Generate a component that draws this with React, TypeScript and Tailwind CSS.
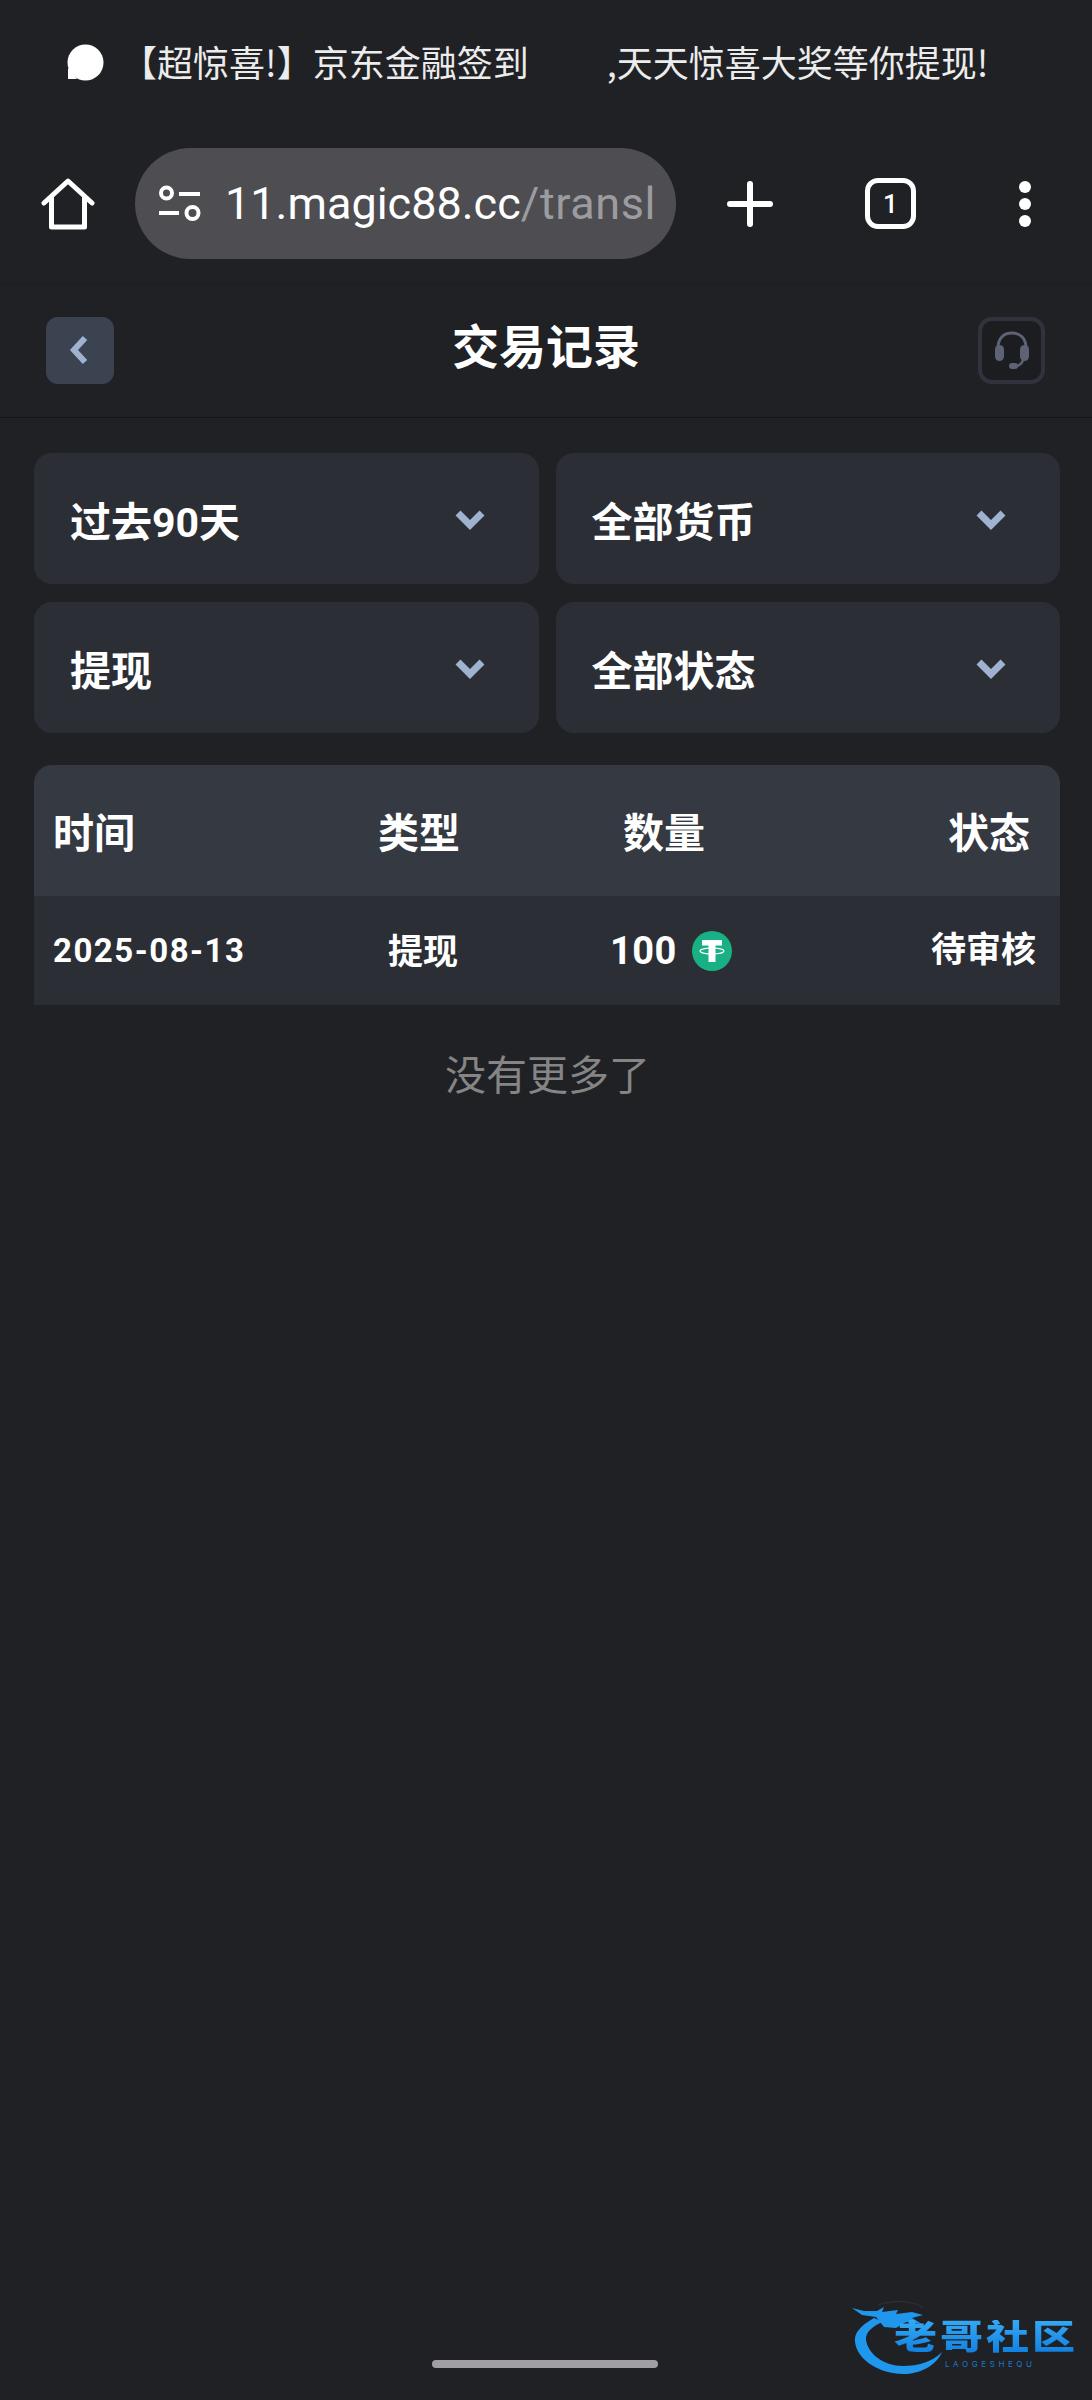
import React from "react";

const cjk = "font-['Roboto','Noto_Sans_CJK_SC',sans-serif]";

function Chevron() {
  return (
    <svg width="30" height="20" viewBox="0 0 30 20" fill="none" className="mt-[2px]">
      <path d="M3 3 L15 15 L27 3" stroke="#9fb3d1" strokeWidth="7" />
    </svg>
  );
}

function Filter({ label }: { label: string }) {
  return (
    <div className="flex h-[131px] items-center justify-between rounded-[18px] bg-[#2b2e35] pl-9 pr-[54px]">
      <span className="pt-[9px] text-[41px] leading-none font-bold text-white">{label}</span>
      <Chevron />
    </div>
  );
}

function Tether() {
  return (
    <svg width="40" height="40" viewBox="0 0 40 40">
      <circle cx="20" cy="20" r="20" fill="#1ab085" />
      <path d="M10 9 H30 V14.5 H23.5 V31 H16.5 V14.5 H10 Z" fill="#fff" />
      <ellipse cx="20" cy="20" rx="12" ry="3" fill="none" stroke="#fff" strokeWidth="1.2" />
    </svg>
  );
}

export default function App() {
  return (
    <div className={`relative h-[2400px] w-[1092px] overflow-hidden bg-[#202125] text-white ${cjk}`}>
      {/* status bar */}
      <div className="flex h-[124px] items-center pb-[2px] pl-[67px]">
        <svg width="37" height="37" viewBox="0 0 37 37" className="mt-[2px] shrink-0">
          <circle cx="18.5" cy="18.5" r="18" fill="#fff" />
          <path d="M1 24 L1 35 L10 35 Z" fill="#fff" />
        </svg>
        <span className="ml-[17px] whitespace-pre text-[36px] leading-none font-normal text-[#ececec] font-['Noto_Sans_CJK_SC',sans-serif]">
          【超惊喜!】京东金融签到
        </span>
        <span className="ml-[78px] whitespace-pre text-[36px] leading-none font-normal text-[#ececec] font-['Noto_Sans_CJK_SC',sans-serif]">
          ,天天惊喜大奖等你提现!
        </span>
      </div>

      {/* browser toolbar */}
      <div className="flex h-[160px] items-start pt-[24px]">
        <div className="flex h-[111px] w-[135px] items-center justify-center">
          <svg width="54" height="52" viewBox="0 0 54 52" fill="none" stroke="#fff" strokeWidth="5" strokeLinejoin="round" strokeLinecap="round">
            <path d="M3 25 L27 3 L51 25" />
            <path d="M10.5 20 V49 H43.5 V20" />
          </svg>
        </div>
        <div className="flex h-[111px] w-[541px] items-center rounded-[56px] bg-[#4d4d52] pl-[24px] pr-[16px]">
          <svg width="42" height="38" viewBox="0 0 42 38" fill="none" stroke="#fff" strokeWidth="4" className="shrink-0">
            <circle cx="7.5" cy="8" r="5.5" />
            <path d="M20 9 H41" />
            <path d="M0 28 H20" />
            <circle cx="33.5" cy="28" r="6" />
          </svg>
          <span className="ml-[24px] whitespace-nowrap text-[45px] leading-[60px] font-['Roboto',sans-serif] text-white">
            11.magic88.cc<span className="tracking-[0.6px] text-[#9c9ca0]">/transl</span>
          </span>
        </div>
        <div className="flex h-[111px] flex-1 items-center">
          <svg width="46" height="46" viewBox="0 0 46 46" className="ml-[51px] shrink-0" stroke="#fff" strokeWidth="6" strokeLinecap="round">
            <path d="M23 3 V43 M3 23 H43" />
          </svg>
          <div className="ml-[92px] flex h-[51px] w-[51px] shrink-0 items-center justify-center rounded-[13px] border-[5px] border-white font-['Roboto',sans-serif] text-[26px] font-medium leading-none">
            1
          </div>
          <div className="ml-[103px] flex shrink-0 flex-col gap-[5px]">
            <div className="h-[12px] w-[12px] rounded-full bg-white" />
            <div className="h-[12px] w-[12px] rounded-full bg-white" />
            <div className="h-[12px] w-[12px] rounded-full bg-white" />
          </div>
        </div>
      </div>

      {/* page header */}
      <div className="flex h-[134px] items-center justify-between border-y border-t-[#1c1d20] border-b-[#141517] pb-[2px] pl-[46px] pr-[47px]">
        <div className="flex h-[67px] w-[68px] items-center justify-center rounded-[12px] bg-[#3c4350]">
          <svg width="20" height="30" viewBox="0 0 20 30" fill="none" className="mr-[3px]">
            <path d="M16 3 L5 15 L16 27" stroke="#9fb3d1" strokeWidth="6" />
          </svg>
        </div>
        <h1 className="mb-[6px] text-[47px] leading-none font-bold text-white">交易记录</h1>
        <div className="flex h-[67px] w-[67px] items-center justify-center rounded-[14px] border-[4px] border-[#30333c] bg-[#1c1d21]">
          <svg width="34" height="40" viewBox="0 0 34 40" fill="none">
            <path d="M3 18 C3 8 9 3 17 3 C25 3 31 8 31 18" stroke="#5e6275" strokeWidth="3" />
            <rect x="0" y="15" width="9" height="16" rx="4.5" fill="#5e6275" />
            <rect x="25" y="15" width="9" height="16" rx="4.5" fill="#5e6275" />
            <path d="M28 30 C27 34 24 36 19 37" stroke="#5e6275" strokeWidth="2.5" />
            <rect x="14" y="33" width="9" height="6" rx="3" fill="#5e6275" />
          </svg>
        </div>
      </div>

      {/* filters */}
      <div className="grid grid-cols-2 gap-x-[17px] gap-y-[18px] pl-[34px] pr-[32px] pt-[35px]">
        <Filter label="过去90天" />
        <Filter label="全部货币" />
        <Filter label="提现" />
        <Filter label="全部状态" />
      </div>

      {/* table */}
      <div className="ml-[34px] mr-[32px] mt-[32px]">
        <div className="relative h-[131px] rounded-t-[18px] bg-[#353942] text-[41px] leading-none font-bold">
          <div className="grid h-full grid-cols-[325px_245px_245px_1fr] items-center pl-[19px] pr-[30px] pt-[7px]">
            <span>时间</span>
            <span>类型</span>
            <span>数量</span>
            <span className="text-right">状态</span>
          </div>
        </div>
        <div className="h-[109px] bg-[#2b2e35]">
          <div className="grid h-full grid-cols-[335px_223px_1fr_auto] items-center pl-[19px] pr-[24px] font-bold">
            <span className="text-[33px] leading-none tracking-[1.5px]">2025-08-13</span>
            <span className="pt-[4px] text-[35px] leading-none">提现</span>
            <span className="-ml-[1px] flex items-center gap-[15px] text-[38px] leading-none tracking-[0.5px]">
              100
              <Tether />
            </span>
            <span className="text-[35px] leading-none">待审核</span>
          </div>
        </div>
      </div>

      <p className="mt-[51px] pl-[3px] text-center text-[41px] leading-none font-normal text-[#858585]">没有更多了</p>

      {/* home indicator */}
      <div className="absolute bottom-[32px] left-[432px] h-[8px] w-[226px] rounded-full bg-[#a0a0a4]" />

      {/* watermark */}
      <div className="absolute left-[850px] top-[2300px] h-[80px] w-[235px]">
        <svg width="100" height="80" viewBox="0 0 100 80" className="absolute left-0 top-0 blur-[0.5px]" fill="none">
          <path d="M24 18 C10 26 4 33 5 42 C7 60 30 74 53 74 C70 74 86 66 92 52 C82 62 68 66 53 66 C34 66 18 54 16 40 C15 32 24 25 33 22 Z" fill="#1f97ec" />
          <path d="M2 8 L14 11 L27 11 L34 7 L32 12 L48 10 L46 14 L62 12 L73 15 L62 18 L72 24 L56 22 L46 28 L34 27 L26 17 L12 15 Z" fill="#1f97ec" />
          <path d="M28 5 C42 0 64 0 73 8" stroke="#2a3440" strokeWidth="1" />
        </svg>
        <span className="absolute left-[44px] top-[20px] origin-top-left scale-y-[0.8] whitespace-nowrap bg-gradient-to-b from-[#35a9f5] to-[#0e7fe0] bg-clip-text text-[43px] leading-none font-black tracking-[3px] text-transparent">
          老哥社区
        </span>
        <span className="absolute left-[95px] top-[60px] whitespace-nowrap font-['Inter',sans-serif] text-[8px] leading-none tracking-[3.6px] text-[#1a78c8]">
          LAOGESHEQU
        </span>
      </div>
    </div>
  );
}
